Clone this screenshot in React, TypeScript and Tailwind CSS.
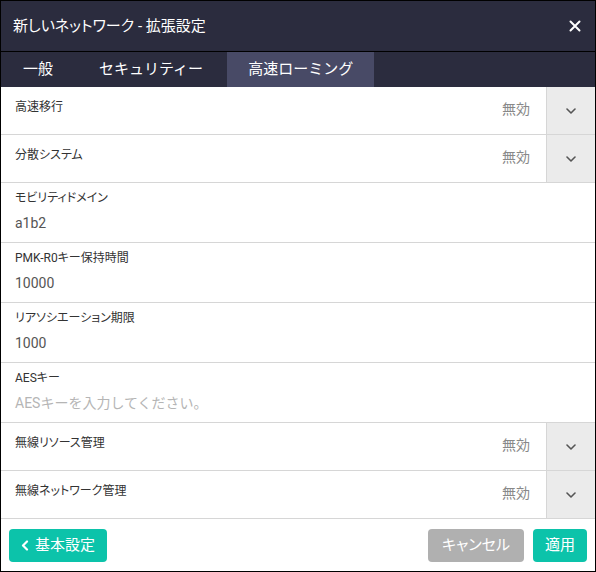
import React from 'react';

const font = { fontFamily: 'Roboto, "Noto Sans CJK JP", sans-serif' };

const Chevron = () => (
  <svg width="10" height="6" viewBox="0 0 10 6" fill="none">
    <path d="M1 1l4 4 4-4" stroke="#555" strokeWidth="1.6" strokeLinecap="round" strokeLinejoin="round" />
  </svg>
);

const SelectRow = ({ label, value }: { label: string; value: string }) => (
  <div className="flex h-[48px] border-b border-[#d6d6d6]">
    <div className="flex-1 pl-[14px] pt-[11px] text-[12px] text-[#333]">{label}</div>
    <div className="pr-[16px] pt-[12px] text-[14px] text-[#888]">{value}</div>
    <div className="flex w-[49px] items-center justify-center border-l border-[#d6d6d6] bg-[#ebebeb]">
      <Chevron />
    </div>
  </div>
);

const InputRow = ({ label, value, placeholder }: { label: string; value?: string; placeholder?: string }) => (
  <div className="flex h-[60px] flex-col border-b border-[#d6d6d6] pl-[14px] pt-[7px]">
    <div className="text-[12px] leading-[16px] text-[#333]">{label}</div>
    <div
      className={`mt-[7px] text-[14px] leading-[20px] [font-feature-settings:normal] ${value ? 'text-[#555]' : 'text-[#b5b5b5]'}`}
    >
      {value || placeholder}
    </div>
  </div>
);

export default function App() {
  return (
    <div className="h-[572px] w-[596px] border border-black bg-white [font-feature-settings:'palt']" style={font}>
      <div className="flex h-[51px] items-center justify-between border-b border-black bg-[#2b2c3e] pl-[12px] pr-[14px]">
        <span className="text-[15px] text-white">新しいネットワーク - 拡張設定</span>
        <svg width="12" height="12" viewBox="0 0 12 12">
          <path d="M1.5 1.5l9 9M10.5 1.5l-9 9" stroke="white" strokeWidth="2" strokeLinecap="round" />
        </svg>
      </div>
      <div className="flex h-[35px] bg-[#2b2c3e] text-[15px] text-white [font-feature-settings:normal]">
        <div className="flex items-center px-[22px]">一般</div>
        <div className="flex items-center px-[24px]">セキュリティー</div>
        <div className="flex items-center bg-[#484a66] px-[21px]">高速ローミング</div>
      </div>
      <div className="flex flex-col">
        <SelectRow label="高速移行" value="無効" />
        <SelectRow label="分散システム" value="無効" />
        <InputRow label="モビリティドメイン" value="a1b2" />
        <InputRow label="PMK-R0キー保持時間" value="10000" />
        <InputRow label="リアソシエーション期限" value="1000" />
        <InputRow label="AESキー" placeholder="AESキーを入力してください。" />
        <SelectRow label="無線リソース管理" value="無効" />
        <SelectRow label="無線ネットワーク管理" value="無効" />
      </div>
      <div className="flex items-center justify-between px-[8px] pt-[10px]">
        <button className="flex h-[33px] w-[98px] items-center justify-center gap-[6px] rounded-[4px] bg-[#0cc3aa] text-[15px] text-white">
          <svg width="8" height="11" viewBox="0 0 8 11">
            <path d="M6 1.5L2 5.5l4 4" stroke="white" strokeWidth="2.2" fill="none" strokeLinecap="round" strokeLinejoin="round" />
          </svg>
          基本設定
        </button>
        <div className="flex gap-[9px]">
          <button className="h-[33px] w-[96px] rounded-[4px] bg-[#b0b0b0] text-[15px] text-white">キャンセル</button>
          <button className="h-[33px] w-[54px] rounded-[4px] bg-[#0cc3aa] text-[15px] text-white">適用</button>
        </div>
      </div>
    </div>
  );
}
